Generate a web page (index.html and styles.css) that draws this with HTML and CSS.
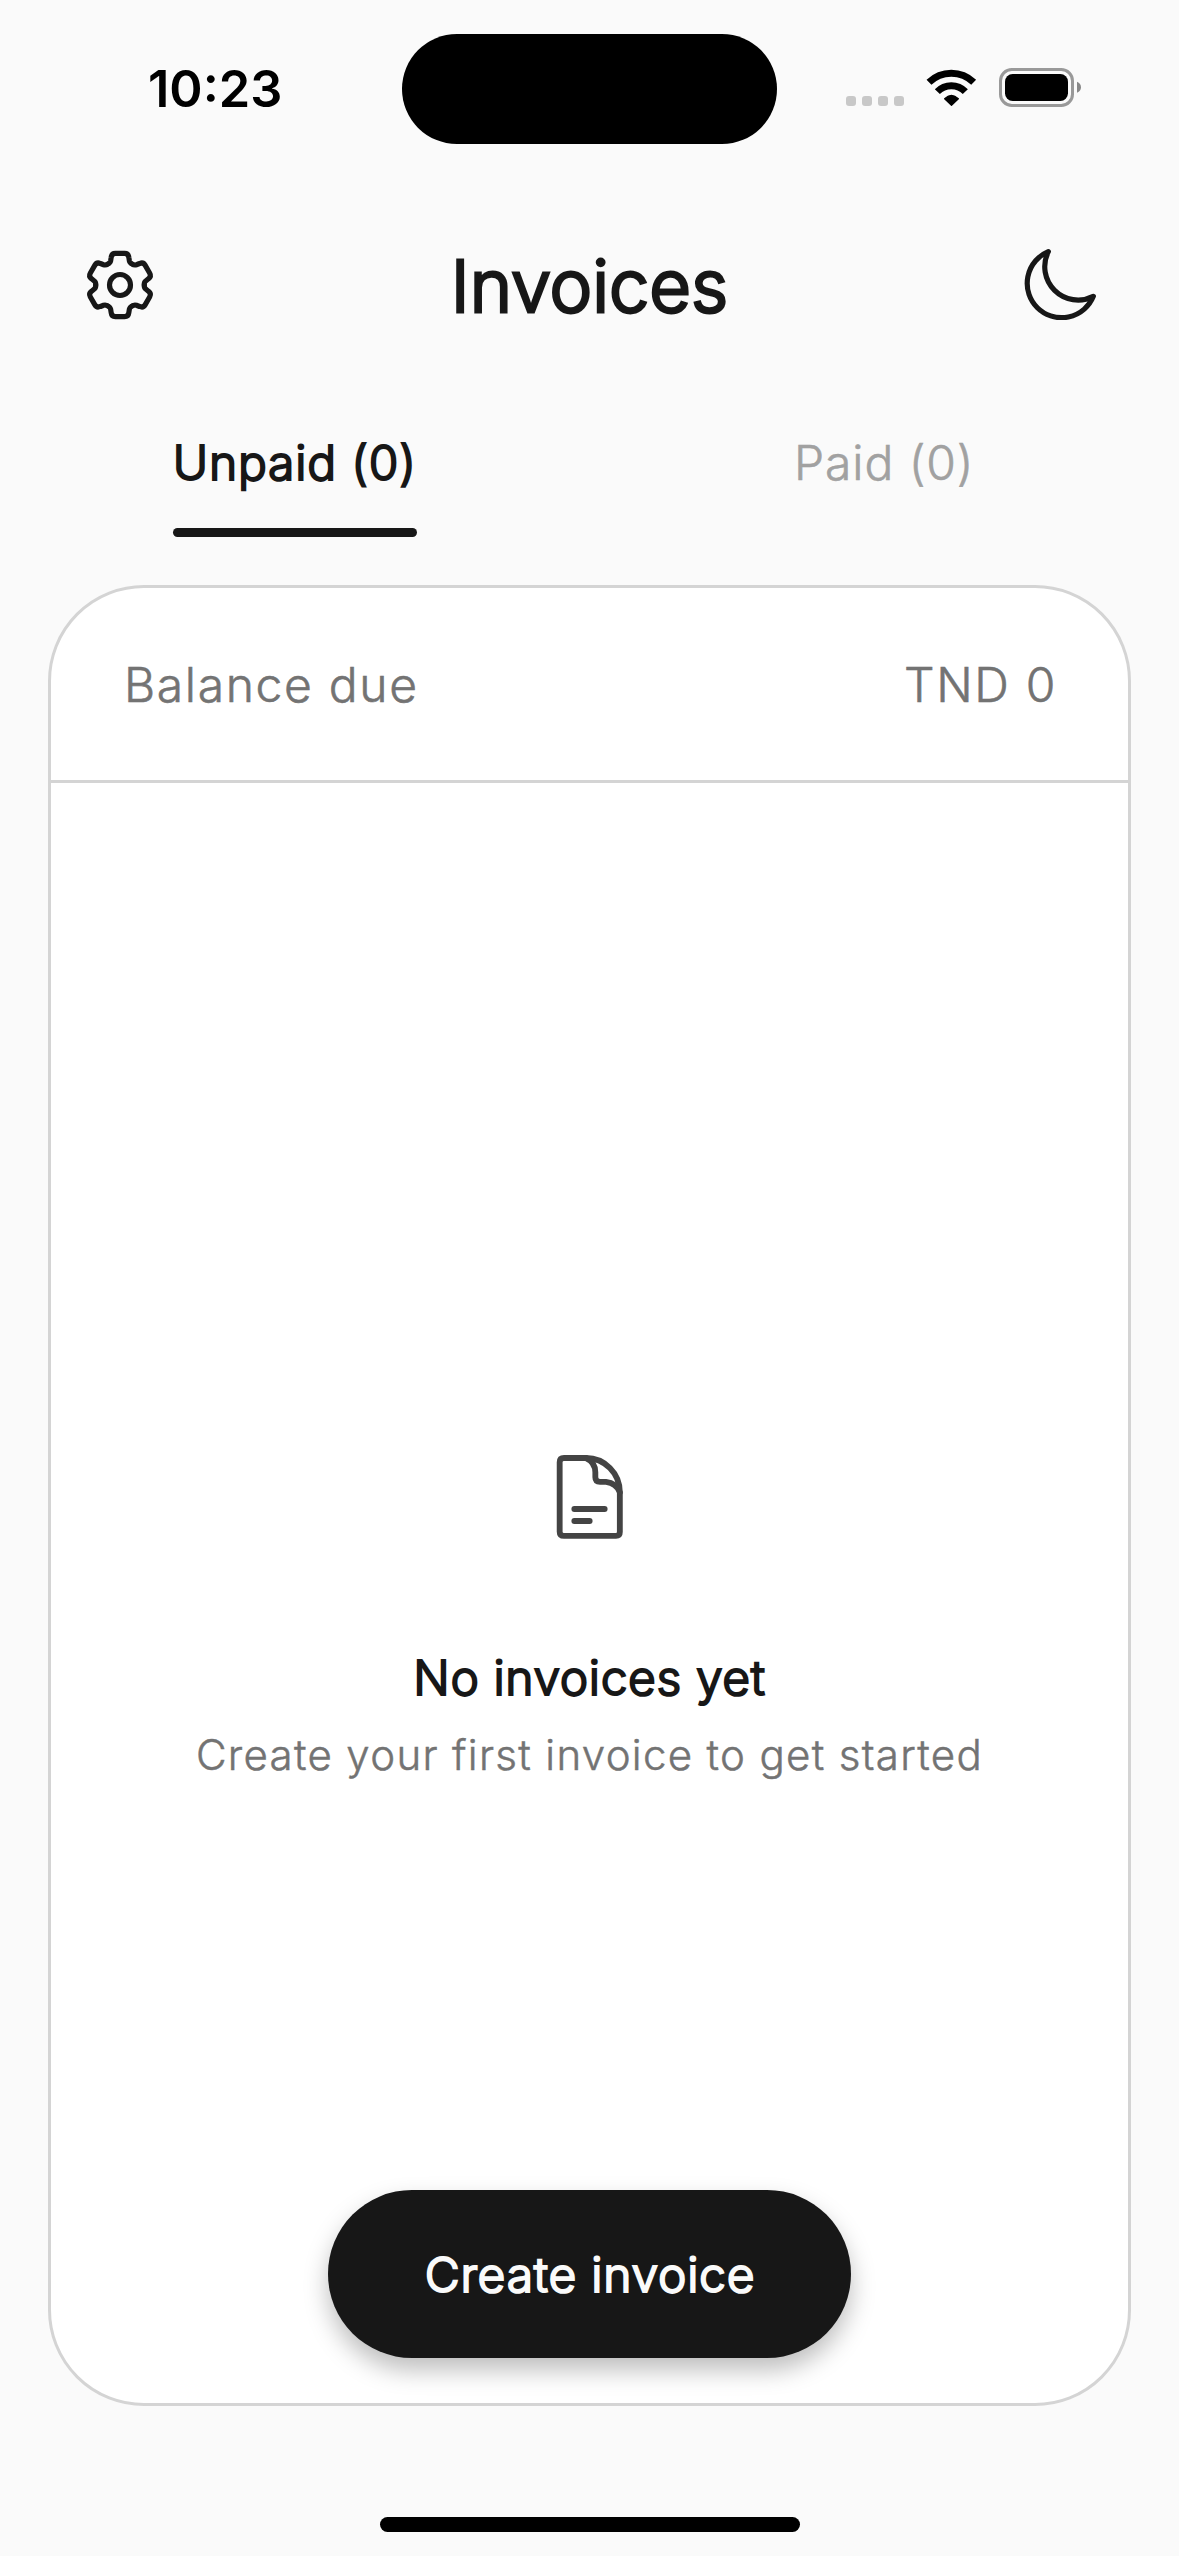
FILE: index.html
```html
<!DOCTYPE html>
<html lang="en">
<head>
<meta charset="utf-8">
<title>Invoices</title>
<link rel="stylesheet" href="styles.css">
</head>
<body>
<div class="screen">
  <div class="status">
    <div class="status-side"><span class="time">10:23</span></div>
    <div class="island"></div>
    <div class="status-side indicators">
      <div class="signal"><i></i><i></i><i></i><i></i></div>
      <svg class="wifi" viewBox="378 144 153 117" fill="none" stroke="#000" stroke-width="21">
        <path d="M387 187A96 96 0 0 1 521 187"/>
        <path d="M412 215A58 58 0 0 1 496 215"/>
        <path d="M434 236Q454 216 475 236L454.500 256Z" fill="#000" stroke-width="4" stroke-linejoin="round"/>
      </svg>
      <svg class="battery" viewBox="597 144 246 117">
        <rect x="601.500" y="148.500" width="216" height="108" rx="34" fill="none" stroke="#999" stroke-width="9"/>
        <rect x="615" y="162" width="189" height="81" rx="23"/>
        <path d="M831 185Q843 190 843 201.500T831 218Z" fill="#888"/>
      </svg>
    </div>
  </div>

  <header class="header">
    <svg class="gear" viewBox="-105 -108 210 216" fill="none" stroke="#171717" stroke-width="15.500" stroke-linecap="round" stroke-linejoin="round">
      <defs><path id="tooth" d="M-36.500-63Q-29.500-66-28-73L-26.500-83Q-25-95-14-95H14Q25-95 26.500-83L28-73Q29.500-66 36.500-63"/></defs>
      <use href="#tooth"/>
      <use href="#tooth" transform="rotate(60)"/>
      <use href="#tooth" transform="rotate(120)"/>
      <use href="#tooth" transform="rotate(180)"/>
      <use href="#tooth" transform="rotate(240)"/>
      <use href="#tooth" transform="rotate(300)"/>
      <circle r="31.500"/>
    </svg>
    <h1 class="title">Invoices</h1>
    <svg class="moon" viewBox="672 681 216 216" fill="none" stroke="#171717" stroke-width="15.500" stroke-linejoin="round">
      <path d="M745 692A103 103 0 1 0 880 826A100 100 0 0 1 745 692Z"/>
    </svg>
  </header>

  <nav class="tabs">
    <div class="tab"><span class="tab-label active">Unpaid (0)</span></div>
    <div class="tab"><span class="tab-label">Paid (0)</span></div>
  </nav>

  <main class="card">
    <div class="balance"><span>Balance due</span><span>TND 0</span></div>
    <div class="empty">
      <svg class="file" viewBox="168 102 204 258" fill="none" stroke="#444" stroke-width="17.500" stroke-linecap="round" stroke-linejoin="round">
        <path d="M192 114H258C314 114 359.500 160 359.500 217V336Q359.500 347.500 348 347.500H192Q179 347.500 179 335V127Q179 114 192 114Z"/>
        <path d="M258 114Q286 127 286 157V172Q286 185.500 300 185.500H318Q349 189 359.500 217"/>
        <path d="M223 267H314M223 303H269"/>
      </svg>
      <h2 class="empty-title">No invoices yet</h2>
      <p class="empty-text">Create your first invoice to get started</p>
    </div>
    <button class="create">Create invoice</button>
  </main>

  <div class="home"></div>
</div>
</body>
</html>
```

FILE: styles.css
```css
* { box-sizing: border-box; margin: 0; padding: 0; }
body { background: #fafafa; font-family: Inter, "Liberation Sans", sans-serif; font-weight: 300; color: #171717; }
.screen { width: 1179px; height: 2556px; display: flex; flex-direction: column; align-items: center; }
svg { display: block; flex: none; }

.status { width: 100%; height: 177px; padding-top: 34px; display: grid; grid-template-columns: 402px 375px 402px; align-items: start; }
.status-side { height: 110px; display: flex; align-items: center; }
.time { padding-left: 148px; font-size: 50.5px; line-height: 60px; font-weight: 600; color: #000; margin-top: -1px; }
.island { height: 110px; border-radius: 55px; background: #000; }
.indicators { justify-content: flex-end; padding-right: 98px; padding-bottom: 3px; }
.signal { display: flex; gap: 6px; padding-top: 27px; margin-right: 22px; }
.signal i { width: 10px; height: 10px; border-radius: 3px; background: #c8c8c8; }
.wifi { width: 51px; height: 39px; margin-right: 22px; }
.battery { width: 82px; height: 39px; }

.header { width: 100%; height: 216px; padding: 0 83px 0 85px; display: flex; align-items: center; justify-content: space-between; }
.gear { width: 70px; height: 72px; }
.moon { width: 72px; height: 72px; margin-bottom: 3px; }
.title { font-size: 72px; line-height: 96px; font-weight: 300; -webkit-text-stroke: 2.9px #171717; padding-top: 2px; }

.tabs { width: 100%; height: 192px; display: flex; }
.tab { flex: 1; display: flex; justify-content: center; align-items: flex-start; }
.tab-label { height: 144px; padding-top: 34px; font-size: 48px; line-height: 72px; letter-spacing: .9px; color: #a1a1a1; -webkit-text-stroke: .6px currentColor; }
.tab-label.active { color: #171717; letter-spacing: .8px; -webkit-text-stroke: 2px #171717; }
.tab-label.active::after { content: ""; display: block; height: 9px; margin-top: 29px; border-radius: 4.5px; background: #171717; }

.card { width: 1083px; height: 1821px; display: flex; flex-direction: column; align-items: center; background: #fff; border: 3px solid #d4d4d4; border-radius: 96px; }
.balance { width: 100%; height: 195px; border-bottom: 3px solid #d4d4d4; padding: 0 71px 0 73px; display: flex; align-items: center; justify-content: space-between; font-size: 48px; letter-spacing: 1.65px; color: #737373; -webkit-text-stroke: .6px currentColor; }
.empty { width: 100%; flex: 1; display: flex; flex-direction: column; align-items: center; padding-top: 671px; }
.file { width: 68px; height: 86px; margin-left: 1px; }
.empty-title { margin-top: 102px; font-size: 48px; line-height: 72px; font-weight: 300; letter-spacing: .6px; -webkit-text-stroke: 2px #171717; }
.empty-text { margin-top: 9px; font-size: 42px; line-height: 64px; letter-spacing: 1.32px; color: #737373; -webkit-text-stroke: .5px currentColor; }
.create { width: 523px; height: 168px; margin-bottom: 45px; border: 0; border-radius: 84px; background: #171717; color: #fafafa; font: 300 48px/72px Inter, "Liberation Sans", sans-serif; letter-spacing: .75px; padding: 1px 0 0 1px; -webkit-text-stroke: 2px #fafafa; box-shadow: 0 12px 24px rgba(0, 0, 0, .26); }

.home { width: 420px; height: 15px; margin-top: 111px; border-radius: 7.5px; background: #000; }
```
